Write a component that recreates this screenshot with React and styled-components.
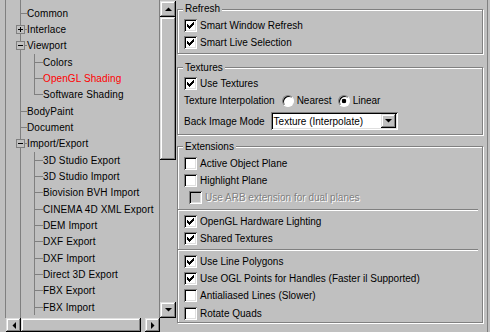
import React from "react";
import styled, { createGlobalStyle } from "styled-components";

const GlobalStyle = createGlobalStyle`
  html, body {
    margin: 0;
    padding: 0;
    background: #c0c0c0;
  }
  body {
    font-family: "Liberation Sans", Arial, sans-serif;
    font-size: 10px;
    color: #000;
  }
`;

const LINE = "#808080";

const treeItems = [
  { label: "Common", level: 0 },
  { label: "Interlace", level: 0, toggle: "plus" },
  { label: "Viewport", level: 0, toggle: "minus" },
  { label: "Colors", level: 1 },
  { label: "OpenGL Shading", level: 1, selected: true },
  { label: "Software Shading", level: 1, last: true },
  { label: "BodyPaint", level: 0 },
  { label: "Document", level: 0 },
  { label: "Import/Export", level: 0, toggle: "minus" },
  { label: "3D Studio Export", level: 1 },
  { label: "3D Studio Import", level: 1 },
  { label: "Biovision BVH Import", level: 1 },
  { label: "CINEMA 4D XML Export", level: 1 },
  { label: "DEM Import", level: 1 },
  { label: "DXF Export", level: 1 },
  { label: "DXF Import", level: 1 },
  { label: "Direct 3D Export", level: 1 },
  { label: "FBX Export", level: 1 },
  { label: "FBX Import", level: 1 },
];

const Window = styled.div`
  width: 490px;
  height: 332px;
  display: flex;
  background: #c0c0c0;
  overflow: hidden;
`;

/* ---------- left: tree ---------- */

const TreePane = styled.div`
  flex: none;
  width: 176px;
  box-sizing: border-box;
  padding-left: 5px;
  display: grid;
  grid-template-columns: 155px 16px;
  grid-template-rows: 318px 14px;
`;

const TreeView = styled.div`
  box-sizing: border-box;
  border-left: 1px solid ${LINE};
  border-right: 1px solid ${LINE};
  padding-top: 5px;
  overflow: hidden;
  background: linear-gradient(${LINE}, ${LINE}) 14px 0 / 1px 100% no-repeat,
    #c0c0c0;
`;

const TreeRow = styled.div`
  display: flex;
  align-items: center;
  height: ${(p) => p.$h}px;
  white-space: nowrap;
`;

const RootCell = styled.span`
  flex: none;
  width: 21px;
  height: 100%;
  display: flex;
  align-items: center;
  background: ${(p) =>
    p.$branch
      ? `linear-gradient(${LINE}, ${LINE}) 14px ${p.$mid}px / 7px 1px no-repeat`
      : "none"};
`;

const ChildCell = styled.span`
  flex: none;
  width: 16px;
  height: 100%;
  background: linear-gradient(${LINE}, ${LINE}) 7px ${(p) => p.$mid}px / 9px
      1px no-repeat,
    linear-gradient(${LINE}, ${LINE}) 7px 0 /
      1px ${(p) => (p.$last ? `${p.$mid}px` : "100%")} no-repeat;
`;

const Expander = styled.span`
  box-sizing: border-box;
  width: 9px;
  height: 9px;
  margin-left: 10px;
  border: 1px solid ${LINE};
  background: linear-gradient(#000, #000) 1px 3px / 5px 1px no-repeat,
    ${(p) =>
      p.$plus ? "linear-gradient(#000, #000) 3px 1px / 1px 5px no-repeat," : ""}
      #c0c0c0;
`;

const TreeLabel = styled.span`
  color: ${(p) => (p.$selected ? "#ff0000" : "#000")};
  letter-spacing: 0.1px;
`;

const raised = `
  background: #c0c0c0;
  box-shadow: inset -1px -1px #000, inset 1px 1px #dfdfdf,
    inset -2px -2px #808080, inset 2px 2px #fff;
`;

const VScroll = styled.div`
  display: flex;
  flex-direction: column;
  padding-top: 1px;
`;

const HScroll = styled.div`
  display: flex;
  padding-left: 1px;
`;

const ScrollButton = styled.div`
  flex: none;
  box-sizing: border-box;
  width: ${(p) => p.$w}px;
  height: ${(p) => p.$h}px;
  display: flex;
  align-items: center;
  justify-content: center;
  ${raised}
`;

const Thumb = styled.div`
  flex: ${(p) => (p.$grow ? "1" : "none")};
  height: ${(p) => (p.$len ? `${p.$len}px` : "auto")};
  margin-right: ${(p) => p.$gapEnd || 0}px;
  ${raised}
`;

const Track = styled.div`
  flex: 1;
`;

const Arrow = ({ dir }) => {
  const pts = {
    up: "0,4 7,4 3.5,0.5",
    down: "0,0 7,0 3.5,3.5",
    left: "4,0 4,7 0.5,3.5",
    right: "0,0 0,7 3.5,3.5",
  }[dir];
  const vertical = dir === "up" || dir === "down";
  return (
    <svg
      width={vertical ? 7 : 4}
      height={vertical ? 4 : 7}
      viewBox={vertical ? "0 0 7 4" : "0 0 4 7"}
    >
      <polygon points={pts} fill="#000" />
    </svg>
  );
};

/* ---------- right: options ---------- */

const OptionsPanel = styled.div`
  flex: none;
  width: 312px;
  box-sizing: border-box;
  padding: 3px 4px 0 1px;
  border-right: 1px solid ${LINE};
`;

const Group = styled.fieldset`
  margin: 0 0 ${(p) => p.$gap || 0}px;
  padding: ${(p) => p.$pad};
  min-width: 0;
  border: 1px solid ${LINE};
  box-shadow: 1px 1px 0 #fff, inset 1px 1px 0 #fff;
`;

const Legend = styled.legend`
  margin-left: 5px;
  padding: 0 2px;
  font-size: 10px;
  line-height: 12px;
  background: #c0c0c0;
`;

const OptionRow = styled.div`
  display: flex;
  align-items: center;
  height: ${(p) => p.$h || 17.2}px;
  margin-top: ${(p) => p.$mt || 0}px;
  padding-left: ${(p) => (p.$indent ? 11 : 6)}px;
  white-space: nowrap;
`;

const Separator = styled.div`
  height: 0;
  margin: 2px 4px 2px 0;
  border-top: 1px solid ${LINE};
  border-bottom: 1px solid #fff;
`;

const sunken = `
  box-shadow: inset 1px 1px #808080, inset -1px -1px #fff,
    inset 2px 2px #000, inset -2px -2px #dfdfdf;
`;

const CheckBox = styled.span`
  flex: none;
  width: 13px;
  height: 13px;
  background: ${(p) => (p.$disabled ? "#c0c0c0" : "#fff")};
  ${sunken}
`;

const Text = styled.span`
  margin-left: ${(p) => p.$ml ?? 3}px;
  color: ${(p) => (p.$disabled ? "#808080" : "#000")};
  text-shadow: ${(p) => (p.$disabled ? "1px 1px 0 #fff" : "none")};
`;

const Radio = styled.span`
  flex: none;
  box-sizing: border-box;
  width: 12px;
  height: 12px;
  margin-left: ${(p) => p.$ml}px;
  border-radius: 50%;
  border: 1px solid;
  border-color: #808080 #fff #fff #808080;
  box-shadow: inset 1px 1px 0 #000;
  background: ${(p) =>
    p.$on ? "radial-gradient(circle, #000 0 2px, #fff 2.6px)" : "#fff"};
`;

const Select = styled.div`
  flex: none;
  box-sizing: border-box;
  width: 127px;
  height: 18px;
  margin-left: 6px;
  padding: 2px 2px 2px 3px;
  display: flex;
  align-items: center;
  background: #fff;
  ${sunken}
`;

const SelectValue = styled.span`
  flex: 1;
`;

const checkPath =
  "M9 3h1v1h-1zM8 4h2v1h-2zM3 5h1v1h-1zM7 5h3v1h-3zM3 6h2v1h-2zM6 6h3v1h-3zM3 7h5v1h-5zM4 8h3v1h-3zM5 9h1v1h-1z";

const Check = ({ checked, disabled, indent, children }) => (
  <OptionRow $indent={indent}>
    <CheckBox $disabled={disabled}>
      {checked && (
        <svg width="13" height="13" viewBox="0 0 13 13" shapeRendering="crispEdges">
          <path d={checkPath} fill="#000" />
        </svg>
      )}
    </CheckBox>
    <Text $disabled={disabled}>{children}</Text>
  </OptionRow>
);

const rowHeight = (i) =>
  Math.round(16.33 * (i + 1) - 0.17) - Math.round(16.33 * i - 0.17);

export default function App() {
  return (
    <>
      <GlobalStyle />
      <Window>
        <TreePane>
          <TreeView>
            {treeItems.map((item, i) => {
              const h = rowHeight(i);
              const mid = Math.floor(h / 2);
              return (
                <TreeRow key={item.label} $h={h}>
                  <RootCell $branch={item.level === 0} $mid={mid}>
                    {item.toggle && <Expander $plus={item.toggle === "plus"} />}
                  </RootCell>
                  {item.level === 1 && <ChildCell $mid={mid} $last={item.last} />}
                  <TreeLabel $selected={item.selected}>{item.label}</TreeLabel>
                </TreeRow>
              );
            })}
          </TreeView>
          <VScroll>
            <ScrollButton $w={16} $h={16}>
              <Arrow dir="up" />
            </ScrollButton>
            <Thumb $len={143} />
            <Track />
            <ScrollButton $w={16} $h={16}>
              <Arrow dir="down" />
            </ScrollButton>
          </VScroll>
          <HScroll>
            <ScrollButton $w={15} $h={14}>
              <Arrow dir="left" />
            </ScrollButton>
            <Thumb $grow $gapEnd={4} />
            <ScrollButton $w={15} $h={14}>
              <Arrow dir="right" />
            </ScrollButton>
          </HScroll>
          <div />
        </TreePane>

        <OptionsPanel>
          <Group $pad="2px 0 2px" $gap={7.6}>
            <Legend>Refresh</Legend>
            <Check checked>Smart Window Refresh</Check>
            <Check checked>Smart Live Selection</Check>
          </Group>

          <Group $pad="1px 0 3px" $gap={5.6}>
            <Legend>Textures</Legend>
            <Check checked>Use Textures</Check>
            <OptionRow>
              <Text $ml={0}>Texture Interpolation</Text>
              <Radio $ml={7} />
              <Text>Nearest</Text>
              <Radio $ml={6} $on />
              <Text>Linear</Text>
            </OptionRow>
            <OptionRow $h={20} $mt={2}>
              <Text $ml={0}>Back Image Mode</Text>
              <Select>
                <SelectValue>Texture (Interpolate)</SelectValue>
                <ScrollButton $w={15} $h={14}>
                  <Arrow dir="down" />
                </ScrollButton>
              </Select>
            </OptionRow>
          </Group>

          <Group $pad="2px 0 0">
            <Legend>Extensions</Legend>
            <Check>Active Object Plane</Check>
            <Check>Highlight Plane</Check>
            <Check indent disabled>
              Use ARB extension for dual planes
            </Check>
            <Separator />
            <Check checked>OpenGL Hardware Lighting</Check>
            <Check checked>Shared Textures</Check>
            <Separator />
            <Check checked>Use Line Polygons</Check>
            <Check checked>Use OGL Points for Handles (Faster il Supported)</Check>
            <Check>Antialiased Lines (Slower)</Check>
            <Check>Rotate Quads</Check>
          </Group>
        </OptionsPanel>
      </Window>
    </>
  );
}
